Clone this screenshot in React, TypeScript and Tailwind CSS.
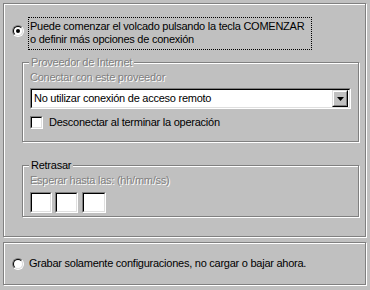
import React from 'react';

const font = { fontFamily: '"Liberation Sans", Arial, sans-serif' };

function Radio({ checked }: { checked?: boolean }) {
  return (
    <div className="w-3 h-3 shrink-0 rounded-full border border-t-[#808080] border-l-[#808080] border-b-white border-r-white">
      <div className="flex items-center justify-center w-full h-full rounded-full bg-white border border-t-black border-l-black border-b-[#dfdfdf] border-r-[#dfdfdf]">
        {checked && <div className="w-1 h-1 rounded-full bg-black" />}
      </div>
    </div>
  );
}

function Sunken({ className, children }: { className?: string; children?: React.ReactNode }) {
  return (
    <div className={`border border-t-[#808080] border-l-[#808080] border-b-white border-r-white ${className ?? ''}`}>
      <div className="w-full h-full bg-white border border-t-black border-l-black border-b-[#dfdfdf] border-r-[#dfdfdf]">
        {children}
      </div>
    </div>
  );
}

function Disabled({ children }: { children: React.ReactNode }) {
  return <span className="text-[#808080] [text-shadow:1px_1px_0_#fff]">{children}</span>;
}

function Group({ legend, className, children }: { legend: React.ReactNode; className?: string; children: React.ReactNode }) {
  return (
    <div className={`relative ml-[18px] w-[337px] border border-[#808080] shadow-[inset_1px_1px_0_#fff,1px_1px_0_#fff] ${className ?? ''}`}>
      <span className="absolute left-[6px] top-[-7px] px-[2px] bg-[#c0c0c0] leading-[13px] whitespace-nowrap">{legend}</span>
      {children}
    </div>
  );
}

export default function App() {
  return (
    <div
      className="w-[370px] h-[290px] bg-[#c0c0c0] text-[11px] tracking-[-0.25px] text-black overflow-hidden pt-[3px] whitespace-nowrap"
      style={font}
    >
      <div className="ml-[3px] w-[363px] h-[234px] border border-[#808080] shadow-[inset_1px_1px_0_#fff,1px_1px_0_#fff]">
        <div className="mt-[13px] flex items-start">
          <div className="ml-[8px] mt-[8px]">
            <Radio checked />
          </div>
          <div className="ml-[4px] w-[284px] h-[33px] border border-dotted border-black px-[1px] pt-[2px] leading-[13px]">
            Puede comenzar el volcado pulsando la tecla COMENZAR
            <br />o definir más opciones de conexión
          </div>
        </div>

        <Group legend={<Disabled>Proveedor de Internet</Disabled>} className="mt-[12px] h-[80px]">
          <div className="pl-[7px] pt-[8px]">
            <div className="leading-[13px]">
              <Disabled>Conectar con este proveedor</Disabled>
            </div>
            <Sunken className="mt-[4px] w-[321px] h-[21px]">
              <div className="flex h-full items-center justify-between pl-[2px] pr-[1px]">
                <span className="leading-[13px]">No utilizar conexión de acceso remoto</span>
                <div className="w-[16px] h-[17px] bg-[#c0c0c0] border border-t-[#dfdfdf] border-l-[#dfdfdf] border-b-black border-r-black">
                  <div className="flex h-full w-full items-center justify-center border border-t-white border-l-white border-b-[#808080] border-r-[#808080]">
                    <svg width="7" height="4" viewBox="0 0 7 4">
                      <path d="M0 0h7L3.5 4z" fill="#000" />
                    </svg>
                  </div>
                </div>
              </div>
            </Sunken>
            <div className="mt-[7px] flex items-center">
              <Sunken className="w-[13px] h-[13px]" />
              <span className="ml-[6px] leading-[13px]">Desconectar al terminar la operación</span>
            </div>
          </div>
        </Group>

        <Group legend="Retrasar" className="mt-[23px] h-[52px]">
          <div className="pl-[7px] pt-[8px]">
            <div className="leading-[13px]">
              <Disabled>Esperar hasta las: (hh/mm/ss)</Disabled>
            </div>
            <div className="mt-[5px] flex">
              <Sunken className="w-[22px] h-[21px]" />
              <Sunken className="ml-[3px] w-[23px] h-[21px]" />
              <Sunken className="ml-[4px] w-[24px] h-[21px]" />
            </div>
          </div>
        </Group>
      </div>

      <div className="mt-[5px] ml-[3px] w-[363px] h-[43px] border border-[#808080] shadow-[inset_1px_1px_0_#fff,1px_1px_0_#fff] flex items-center">
        <div className="ml-[8px]">
          <Radio />
        </div>
        <span className="ml-[5px] leading-[13px]">Grabar solamente configuraciones, no cargar o bajar ahora.</span>
      </div>
    </div>
  );
}
